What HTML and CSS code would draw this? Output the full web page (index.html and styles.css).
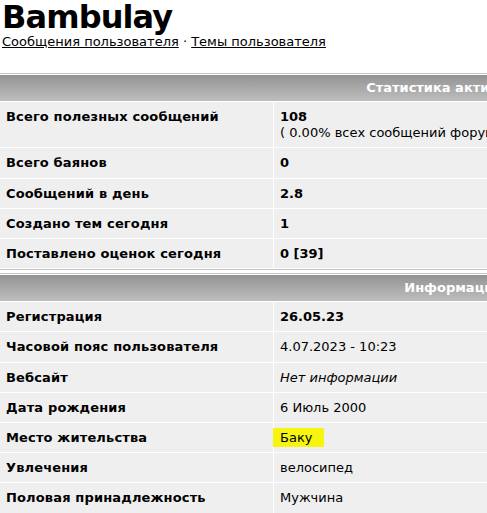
FILE: index.html
```html
<!DOCTYPE html>
<html lang="ru">
<head>
<meta charset="utf-8">
<title>Bambulay</title>
<link rel="stylesheet" href="styles.css">
</head>
<body>
<div class="page">
  <div class="head">
    <h1 class="title">Bambulay</h1>
    <div class="links"><a href="#">Сообщения пользователя</a> · <a href="#">Темы пользователя</a></div>
  </div>

  <table class="tbl tbl-first">
    <colgroup><col class="c1"><col></colgroup>
    <tr><th colspan="2" class="hdr">Статистика активности</th></tr>
    <tr><td class="lbl">Всего полезных сообщений</td><td><b>108</b><br>( 0.00% всех сообщений форума )</td></tr>
    <tr><td class="lbl">Всего баянов</td><td><b>0</b></td></tr>
    <tr><td class="lbl">Сообщений в день</td><td><b>2.8</b></td></tr>
    <tr><td class="lbl">Создано тем сегодня</td><td><b>1</b></td></tr>
    <tr><td class="lbl">Поставлено оценок сегодня</td><td><b>0 [39]</b></td></tr>
  </table>

  <table class="tbl tbl-second">
    <colgroup><col class="c1"><col></colgroup>
    <tr><th colspan="2" class="hdr">Информация</th></tr>
    <tr><td class="lbl">Регистрация</td><td><b>26.05.23</b></td></tr>
    <tr><td class="lbl">Часовой пояс пользователя</td><td>4.07.2023 - 10:23</td></tr>
    <tr><td class="lbl">Вебсайт</td><td><i>Нет информации</i></td></tr>
    <tr><td class="lbl">Дата рождения</td><td>6 Июль 2000</td></tr>
    <tr><td class="lbl">Место жительства</td><td><span class="mark">Баку</span></td></tr>
    <tr><td class="lbl">Увлечения</td><td>велосипед</td></tr>
    <tr><td class="lbl">Половая принадлежность</td><td>Мужчина</td></tr>
  </table>
</div>
</body>
</html>
```

FILE: styles.css
```css
html, body {
  margin: 0;
  padding: 0;
  background: #ffffff;
}

body {
  font-family: "DejaVu Sans", Verdana, sans-serif;
  font-size: 13px;
  color: #000;
}

.page {
  width: 100%;
  overflow: hidden;
}

.head {
  padding-left: 2px;
}

.title {
  margin: 0;
  font-size: 32px;
  line-height: 34px;
  font-weight: bold;
  letter-spacing: -0.9px;
  color: #000;
}

.links {
  line-height: 16px;
}

.links a {
  color: #000;
  text-decoration: underline;
}

.tbl {
  width: 908px;
  border-collapse: separate;
  border-spacing: 1px;
  margin-left: -1px;
  background: #ffffff;
  border-top: 1px solid #c6c6c6;
}

.tbl-first {
  margin-top: 23px;
  border-bottom: 1px solid #c6c6c6;
}

.tbl-second {
  margin-top: 3px;
}

.c1 {
  width: 273px;
}

.hdr {
  height: 26px;
  padding: 0;
  background: linear-gradient(#939393, #bebebe);
  color: #ffffff;
  font-weight: bold;
  text-align: center;
  vertical-align: middle;
  line-height: 16px;
}

td {
  background: #efefef;
  padding: 7px 6px 6px 6px;
  line-height: 16.2px;
  vertical-align: top;
}

td.lbl {
  font-weight: bold;
  letter-spacing: 0.15px;
}

.mark {
  background: #f5f50f;
  padding: 2px 12px 2px 7px;
  margin-left: -7px;
}
```
